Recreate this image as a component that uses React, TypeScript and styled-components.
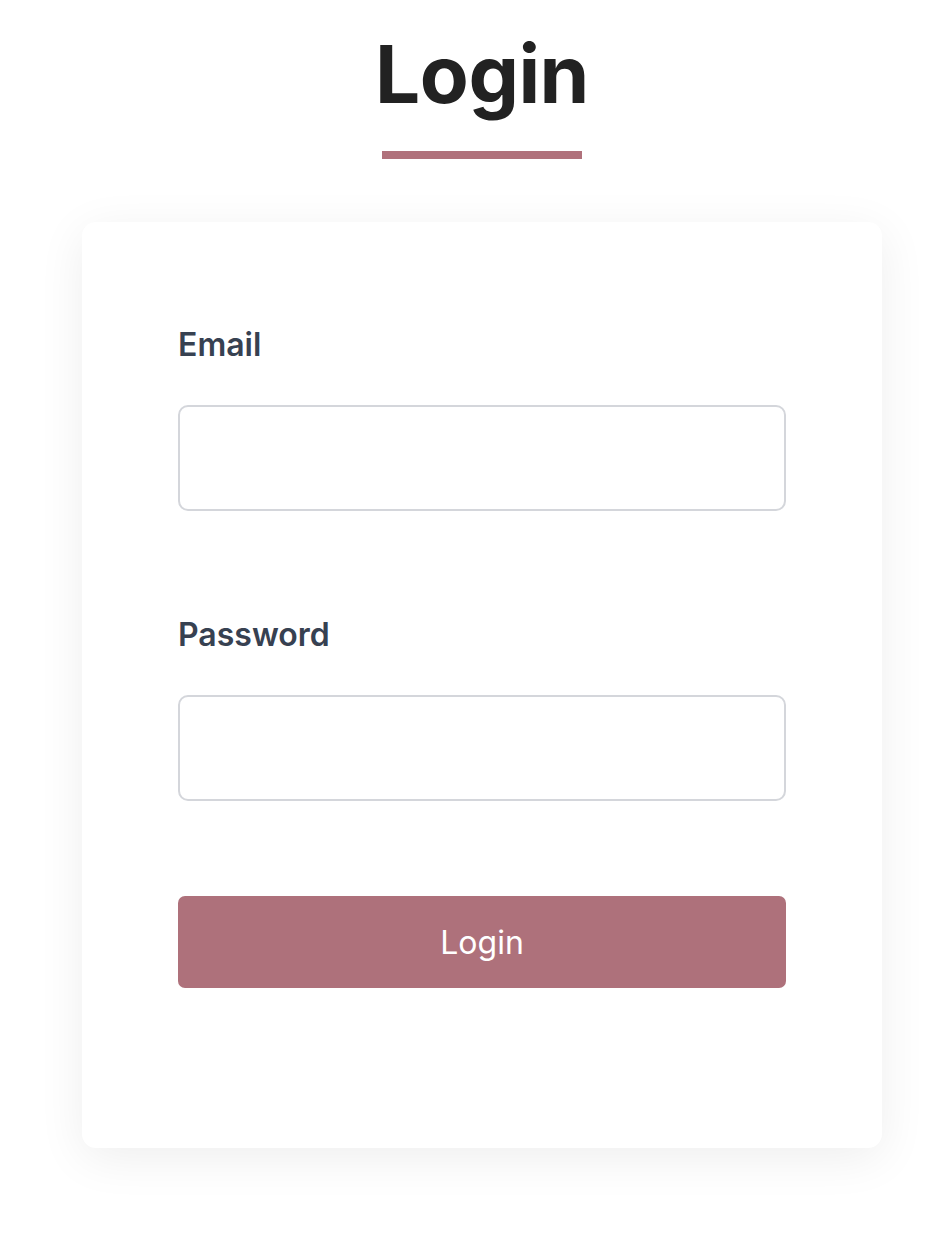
import React from 'react';
import styled, { createGlobalStyle } from 'styled-components';

const GlobalStyle = createGlobalStyle`
  html, body {
    margin: 0;
    padding: 0;
    background: #ffffff;
    font-family: Inter, "Noto Sans", "Liberation Sans", sans-serif;
  }
  * {
    box-sizing: border-box;
  }
`;

const Page = styled.main`
  display: flex;
  flex-direction: column;
  align-items: center;
  padding: 26px 0 92px 16px;
`;

const Title = styled.h1`
  margin: 0;
  font-size: 80px;
  line-height: 96px;
  font-weight: 700;
  color: #222222;
  letter-spacing: -0.5px;
`;

const TitleRule = styled.div`
  width: 200px;
  height: 8px;
  margin-top: 29px;
  background: #b0717b;
`;

const Card = styled.form`
  display: flex;
  flex-direction: column;
  width: 800px;
  margin-top: 63px;
  padding: 99px 96px 160px;
  background: #ffffff;
  border-radius: 14px;
  box-shadow: 0 10px 48px rgba(0, 0, 0, 0.07);
`;

const Field = styled.div<{ $spaced?: boolean }>`
  display: flex;
  flex-direction: column;
  gap: 36px;
  margin-top: ${(p) => (p.$spaced ? '100px' : '0')};
`;

const Label = styled.label`
  font-size: 32px;
  line-height: 48px;
  font-weight: 600;
  color: #374151;
`;

const Input = styled.input`
  width: 100%;
  height: 106px;
  padding: 0 24px;
  border: 2px solid #d4d6db;
  border-radius: 10px;
  font: inherit;
  font-size: 32px;
  color: #222222;
  background: #ffffff;
  outline: none;
`;

const SubmitButton = styled.button`
  height: 92px;
  margin-top: 95px;
  border: none;
  border-radius: 7px;
  background: #ae717b;
  color: #ffffff;
  font: inherit;
  font-size: 32px;
  font-weight: 400;
  cursor: pointer;
`;

export default function App() {
  return (
    <>
      <GlobalStyle />
      <Page>
        <Title>Login</Title>
        <TitleRule />
        <Card onSubmit={(e) => e.preventDefault()}>
          <Field>
            <Label htmlFor="email">Email</Label>
            <Input id="email" type="email" />
          </Field>
          <Field $spaced>
            <Label htmlFor="password">Password</Label>
            <Input id="password" type="password" />
          </Field>
          <SubmitButton type="submit">Login</SubmitButton>
        </Card>
      </Page>
    </>
  );
}
